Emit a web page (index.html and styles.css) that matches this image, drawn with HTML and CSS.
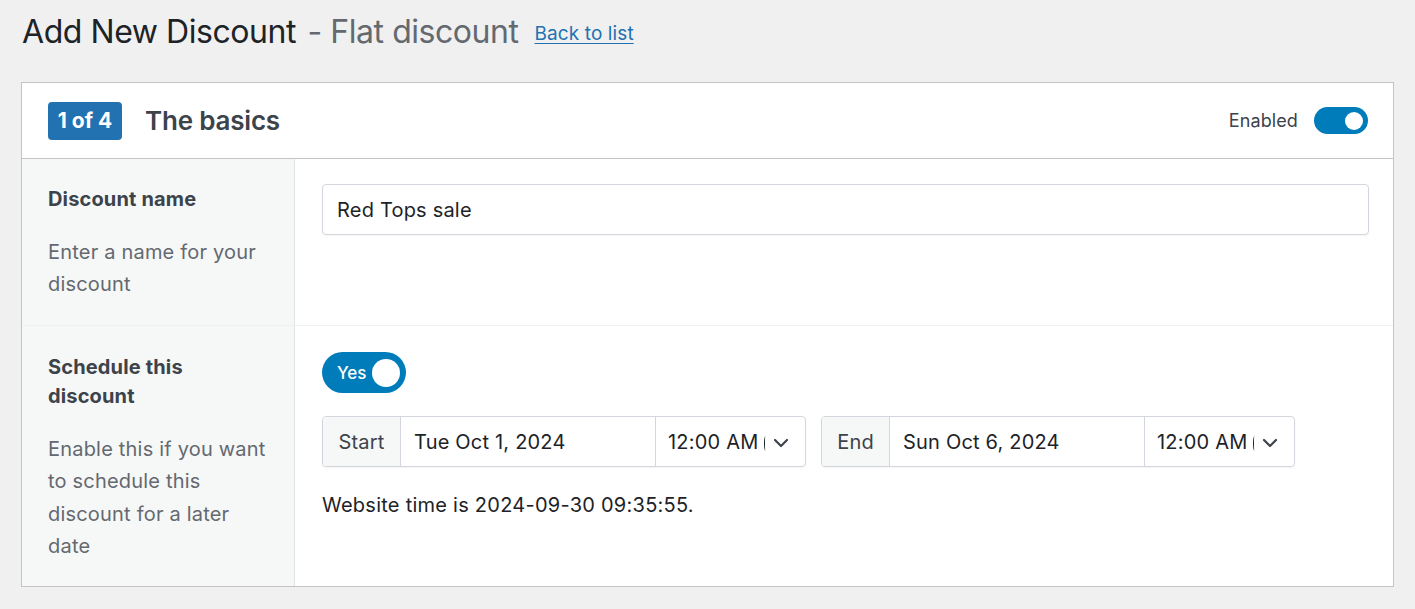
FILE: index.html
```html
<!DOCTYPE html>
<html>
<head>
<meta charset="utf-8">
<link rel="stylesheet" href="styles.css">
</head>
<body>
<div class="page">
  <div class="title-row">
    <h1 class="title">Add New Discount <span class="sub">- Flat discount</span></h1>
    <a class="back" href="#">Back to list</a>
  </div>
  <div class="card">
    <div class="card-head">
      <span class="badge">1 of 4</span>
      <h2 class="card-title">The basics</h2>
      <div class="spacer"></div>
      <span class="enabled">Enabled</span>
      <span class="toggle-sm"><span class="knob-sm"></span></span>
    </div>
    <div class="row row-first">
      <div class="label-col">
        <div class="label">Discount name</div>
        <div class="desc">Enter a name for your discount</div>
      </div>
      <div class="field-col">
        <div class="text-input">Red Tops sale</div>
      </div>
    </div>
    <div class="row row-last">
      <div class="label-col">
        <div class="label">Schedule this discount</div>
        <div class="desc">Enable this if you want to schedule this discount for a later date</div>
      </div>
      <div class="field-col">
        <span class="toggle-lg"><span class="yes">Yes</span><span class="knob-lg"></span></span>
        <div class="dates">
          <div class="group">
            <span class="addon addon-start">Start</span>
            <span class="date">Tue Oct 1, 2024</span>
            <span class="time"><span class="time-text">12:00 AM</span><span class="cut"></span>
              <svg class="chev" width="16" height="10" viewBox="0 0 16 10"><path d="M2 2 L8 8 L14 2" fill="none" stroke="#3c434a" stroke-width="2.2" stroke-linecap="round" stroke-linejoin="round"/></svg>
            </span>
          </div>
          <div class="group">
            <span class="addon addon-end">End</span>
            <span class="date">Sun Oct 6, 2024</span>
            <span class="time"><span class="time-text">12:00 AM</span><span class="cut"></span>
              <svg class="chev" width="16" height="10" viewBox="0 0 16 10"><path d="M2 2 L8 8 L14 2" fill="none" stroke="#3c434a" stroke-width="2.2" stroke-linecap="round" stroke-linejoin="round"/></svg>
            </span>
          </div>
        </div>
        <div class="site-time">Website time is 2024-09-30 09:35:55.</div>
      </div>
    </div>
  </div>
</div>
</body>
</html>
```
FILE: styles.css
```css
html, body {
  margin: 0;
  padding: 0;
  background: #f0f0f1;
  font-family: Inter, "Noto Sans", "Liberation Sans", sans-serif;
  color: #1d2327;
}
.page {
  padding: 0 21px;
}
.title-row {
  display: flex;
  align-items: center;
  height: 82px;
  padding-bottom: 18px;
  box-sizing: border-box;
}
.title {
  margin: 0 0 0 1px;
  font-size: 32px;
  font-weight: 400;
  letter-spacing: -0.45px;
  color: #1d2327;
  line-height: 40px;
}
.title .sub {
  color: #646970;
  margin-left: 3px;
}
.back {
  margin-left: 16px;
  margin-top: 2px;
  font-size: 19px;
  color: #2271b1;
  text-decoration: underline;
  text-underline-offset: 3px;
  letter-spacing: 0.1px;
}
.card {
  background: #fff;
  border: 1px solid #c3c4c7;
  width: 1373px;
  box-sizing: border-box;
}
.card-head {
  display: flex;
  align-items: center;
  height: 75px;
  padding: 0 25px 0 26px;
  border-bottom: 1px solid #c3c4c7;
}
.badge {
  background: #2271b1;
  color: #fff;
  font-weight: 700;
  font-size: 21px;
  border-radius: 4px;
  height: 38px;
  width: 74px;
  display: flex;
  align-items: center;
  justify-content: center;
}
.card-title {
  margin: 0 0 0 23px;
  font-size: 26px;
  font-weight: 600;
  color: #3c434a;
  letter-spacing: -0.2px;
}
.spacer { flex: 1; }
.enabled {
  font-size: 18px;
  color: #3c434a;
  margin-right: 16px;
  letter-spacing: 0.1px;
}
.toggle-sm {
  width: 54px;
  height: 27px;
  background: #007cba;
  border-radius: 14px;
  display: flex;
  align-items: center;
  justify-content: flex-end;
  padding-right: 5px;
  box-sizing: border-box;
}
.knob-sm {
  width: 18px;
  height: 18px;
  background: #fff;
  border-radius: 50%;
}
.row {
  display: flex;
}
.row-first {
  height: 166px;
  border-bottom: 1px solid #f0f0f1;
}
.label-col {
  width: 273px;
  flex: none;
  background: #f6f7f7;
  border-right: 1px solid #e2e3e5;
  padding: 27px 26px 24px 26px;
  box-sizing: border-box;
}
.row-first .label-col { padding-top: 26px; }
.label {
  font-size: 20px;
  font-weight: 700;
  color: #3c434a;
  line-height: 29px;
  letter-spacing: 0.15px;
}
.desc {
  margin-top: 22px;
  font-size: 20px;
  line-height: 32.3px;
  color: #646970;
  letter-spacing: 0.2px;
}
.field-col {
  flex: 1;
  padding: 25px 24px 24px 27px;
}
.row-last .field-col { padding-top: 26px; }
.text-input {
  height: 51px;
  border: 1px solid #d3d6dd;
  border-radius: 4px;
  box-shadow: 0 1px 2px rgba(0,0,0,0.05);
  display: flex;
  align-items: center;
  padding-left: 14px;
  font-size: 20px;
  letter-spacing: 0.2px;
  color: #1d2327;
  box-sizing: border-box;
}
.toggle-lg {
  display: inline-flex;
  align-items: center;
  width: 84px;
  height: 41px;
  background: #007cba;
  border-radius: 21px;
  box-sizing: border-box;
  padding: 0 6px 0 15px;
  justify-content: space-between;
}
.yes {
  color: #fff;
  font-size: 17px;
  font-weight: 500;
}
.knob-lg {
  width: 28px;
  height: 28px;
  border-radius: 50%;
  background: #fff;
}
.dates {
  display: flex;
  gap: 15px;
  margin-top: 23px;
}
.group {
  display: flex;
  height: 51px;
  border: 1px solid #d3d6dd;
  border-radius: 4px;
  box-shadow: 0 1px 2px rgba(0,0,0,0.05);
  box-sizing: border-box;
  font-size: 20px;
  letter-spacing: 0.2px;
  color: #1d2327;
  overflow: hidden;
}
.addon {
  background: #f6f7f7;
  color: #3c434a;
  display: flex;
  align-items: center;
  justify-content: center;
  border-right: 1px solid #d3d6dd;
}
.addon-start { width: 77px; }
.addon-end { width: 67px; }
.date {
  width: 255px;
  display: flex;
  align-items: center;
  padding-left: 13px;
  box-sizing: border-box;
  border-right: 1px solid #d3d6dd;
}
.time {
  width: 149px;
  display: flex;
  align-items: center;
  padding-left: 12px;
  box-sizing: border-box;
  white-space: nowrap;
}
.cut {
  display: inline-block;
  width: 3px;
  height: 15px;
  border-left: 1.6px solid #1d2327;
  border-radius: 50% 0 0 50%;
  margin-left: 6px;
  margin-top: 3px;
  box-sizing: border-box;
}
.chev {
  margin-left: 6px;
  margin-top: 2px;
}
.site-time {
  margin-top: 26px;
  font-size: 20px;
  letter-spacing: 0.25px;
  line-height: 24px;
  color: #1d2327;
}
```
